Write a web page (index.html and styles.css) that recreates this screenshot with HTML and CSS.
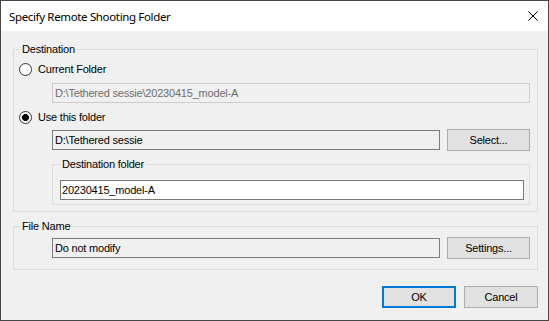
FILE: index.html
```html
<!DOCTYPE html>
<html lang="en">
<head>
    <meta charset="UTF-8">
    <meta name="viewport" content="width=device-width, initial-scale=1.0">
    <title>Specify Remote Shooting Folder</title>
    <link rel="stylesheet" href="styles.css">
</head>
<body>
    <div class="window">
        <header class="titlebar">
            <span class="title">Specify Remote Shooting Folder</span>
            <button class="close" aria-label="Close">
                <svg width="10" height="10" viewBox="0 0 10 10">
                    <path d="M0.5 0.5 L9.5 9.5 M9.5 0.5 L0.5 9.5" stroke="#000" stroke-width="1" fill="none"/>
                </svg>
            </button>
        </header>

        <main class="content">
            <fieldset class="group">
                <legend>Destination</legend>

                <label class="radio-row first">
                    <input type="radio" name="dest">
                    <span>Current Folder</span>
                </label>
                <input class="textbox disabled wide" type="text" value="D:\Tethered sessie\20230415_model-A" disabled>

                <label class="radio-row second">
                    <input type="radio" name="dest" checked>
                    <span>Use this folder</span>
                </label>
                <div class="field-row">
                    <input class="textbox readonly" type="text" value="D:\Tethered sessie" readonly>
                    <button class="btn">Select...</button>
                </div>

                <fieldset class="group inner">
                    <legend>Destination folder</legend>
                    <input class="textbox" type="text" value="20230415_model-A">
                </fieldset>
            </fieldset>

            <fieldset class="group file-name">
                <legend>File Name</legend>
                <div class="field-row">
                    <input class="textbox readonly" type="text" value="Do not modify" readonly>
                    <button class="btn">Settings...</button>
                </div>
            </fieldset>

            <div class="actions">
                <button class="btn default">OK</button>
                <button class="btn">Cancel</button>
            </div>
        </main>
    </div>
</body>
</html>
```

FILE: styles.css
```css
* {
    box-sizing: border-box;
}

body {
    margin: 0;
    font-family: "Liberation Sans", Arial, sans-serif;
    font-size: 11px;
    letter-spacing: -0.2px;
    color: #000;
}

.window {
    width: 549px;
    height: 321px;
    border: 1px solid #474747;
    display: flex;
    flex-direction: column;
    background: #f0f0f0;
}

.titlebar {
    height: 30px;
    background: #fff;
    display: flex;
    align-items: center;
    justify-content: space-between;
    padding: 0 10px 0 8px;
}

.title {
    font-family: "Noto Sans", "Open Sans", sans-serif;
    font-size: 11.5px;
    letter-spacing: -0.35px;
}

.close {
    border: none;
    background: none;
    padding: 0;
    width: 10px;
    height: 10px;
    display: flex;
}

.content {
    flex: 1;
    padding: 12px 10px 0 12px;
    display: flex;
    flex-direction: column;
}

.group {
    margin: 0;
    padding: 0 0 6px 0;
    border: 1px solid #dcdcdc;
    min-width: 0;
}

.group legend {
    margin-left: 6px;
    padding: 0 2px;
    line-height: 13px;
}

.radio-row {
    display: flex;
    align-items: center;
    height: 13px;
    line-height: 13px;
    padding-left: 5px;
}

.radio-row.first {
    margin-top: 7px;
}

.radio-row.second {
    margin-top: 8px;
}

.radio-row input {
    appearance: none;
    -webkit-appearance: none;
    width: 13px;
    height: 13px;
    margin: 0 6px 0 0;
    border: 1px solid #333;
    border-radius: 50%;
    background: #fff;
}

.radio-row input:checked {
    background: radial-gradient(circle, #000 0 3.2px, #fff 3.8px);
}

.textbox {
    display: block;
    height: 20px;
    margin: 0;
    padding: 0 0 0 2px;
    font: inherit;
    letter-spacing: inherit;
    color: #000;
    background: #fff;
    border: 1px solid #7a7a7a;
    border-radius: 0;
    outline: none;
}

.textbox.disabled {
    color: #6d6d6d;
    background: #f0f0f0;
    border-color: #cccccc;
}

.textbox.readonly {
    background: #f0f0f0;
}

.textbox.wide {
    margin: 7px 7px 0 38px;
    width: calc(100% - 45px);
}

.field-row {
    display: flex;
    align-items: center;
    gap: 7px;
    margin: 5px 7px 0 38px;
}

.field-row .textbox {
    flex: 1;
    min-width: 0;
}

.btn {
    height: 22px;
    width: 83px;
    padding: 0;
    font: inherit;
    letter-spacing: inherit;
    color: #000;
    background: #e1e1e1;
    border: 1px solid #adadad;
    border-radius: 0;
}

.group.inner {
    margin: 7px 7px 0 38px;
    padding: 0 5px 4px 7px;
}

.group.inner legend {
    margin-left: 0;
}

.group.inner .textbox {
    width: 100%;
    margin-top: 9px;
    padding-left: 1px;
}

.file-name {
    margin-top: 8px;
    padding-bottom: 10px;
}

.file-name .field-row {
    margin-top: 4px;
}

.actions {
    display: flex;
    justify-content: flex-end;
    gap: 8px;
    margin-top: 16px;
}

.actions .btn {
    width: 74px;
}

.btn.default {
    border: 2px solid #0078d7;
}
```
